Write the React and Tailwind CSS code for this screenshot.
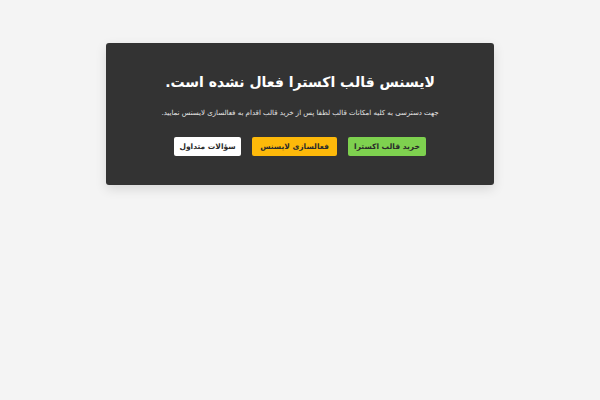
export default function App() {
  return (
    <div className="min-h-screen w-full bg-[#f4f4f4] pt-[43px]" style={{ fontFamily: '"DejaVu Sans", sans-serif' }}>
      <div dir="rtl" className="mx-auto w-[388px] h-[142px] rounded-[3px] bg-[#333333] shadow-[0_4px_12px_rgba(0,0,0,0.12)] flex flex-col items-center">
        <h1 className="mt-[29px] text-[14px] leading-[20px] font-bold text-white">لایسنس قالب اکسترا فعال نشده است.</h1>
        <p className="mt-[16px] text-[7px] leading-[10px] text-[#e6e6e6]">جهت دسترسی به کلیه امکانات قالب لطفا پس از خرید قالب اقدام به فعالسازی لایسنس نمایید.</p>
        <div className="mt-[19px] flex gap-[11px]">
          <button className="h-[19px] w-[78px] rounded-[2px] bg-[#7ed14f] text-[7.5px] font-bold text-[#2a2a2a]">خرید قالب اکسترا</button>
          <button className="h-[19px] w-[85px] rounded-[2px] bg-[#fdb90a] text-[7.5px] font-bold text-[#2a2a2a]">فعالسازی لایسنس</button>
          <button className="h-[19px] w-[67px] rounded-[2px] bg-white text-[7.5px] font-bold text-[#2a2a2a]">سؤالات متداول</button>
        </div>
      </div>
    </div>
  );
}
